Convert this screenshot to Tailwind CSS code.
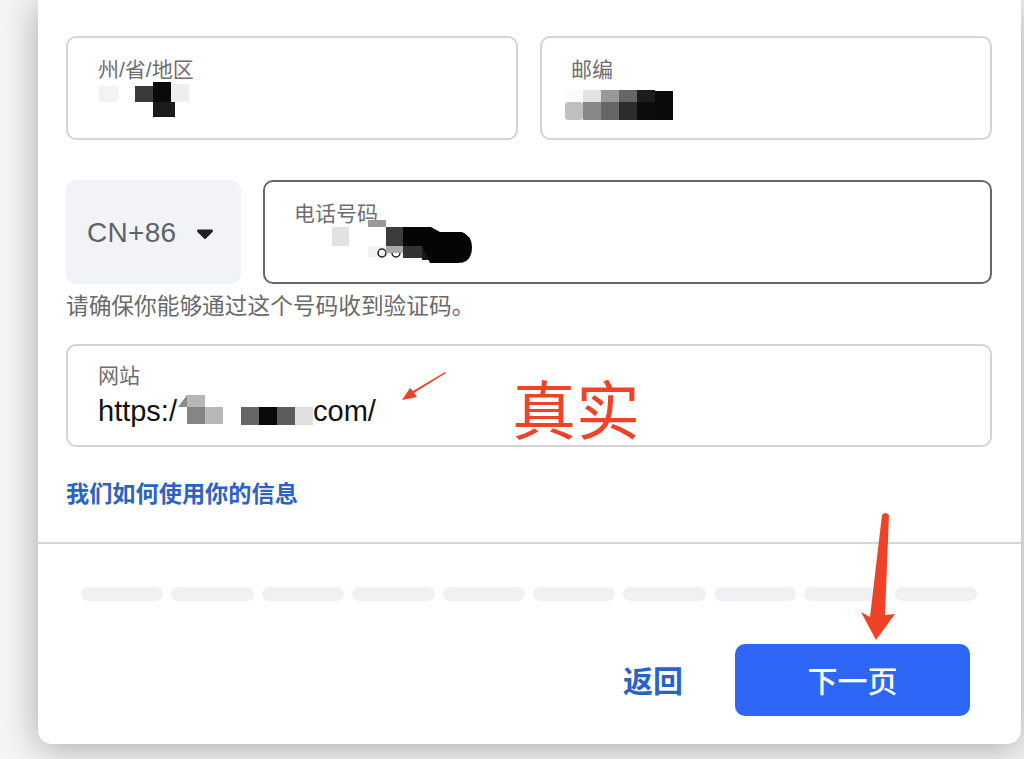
<!DOCTYPE html>
<html lang="zh-CN">
<head>
    <meta charset="UTF-8">
    <meta name="viewport" content="width=device-width, initial-scale=1.0">
    <title>联系信息</title>
    <script src="https://cdn.jsdelivr.net/npm/@tailwindcss/browser@4"></script>
</head>
<body class="h-[759px] overflow-hidden bg-[#f5f5f5] font-['Liberation_Sans','Noto_Sans_CJK_SC',sans-serif]">
    <div class="relative ml-[38px] h-[744px] w-[983px] rounded-b-[14px] bg-white pt-[36px] shadow-[0_4px_36px_rgba(0,0,0,0.32)]">
        <div class="pl-[28px] pr-[29px]">
            <!-- state + zip -->
            <div class="flex gap-[22px]">
                <div class="h-[104px] w-[452px] rounded-[10px] border-2 border-[#d3d3d9] pl-[30px] pt-[18px]">
                    <div class="text-[21px] leading-[28px] text-[#6e6e6e]">州/省/地区</div>
                    <svg class="block -mt-[4px]" width="100" height="38" viewBox="97 80 100 38">
                        <rect x="98" y="86" width="19" height="16" fill="#f3f3f3"/>
                        <rect x="134" y="86" width="18" height="16" fill="#3a3a3a"/>
                        <rect x="152" y="82" width="18" height="20" fill="#0a0a0a"/>
                        <rect x="152" y="102" width="22" height="15" fill="#1c1c1c"/>
                        <rect x="170" y="84" width="18" height="18" fill="#eeeeee"/>
                    </svg>
                </div>
                <div class="h-[104px] w-[452px] rounded-[10px] border-2 border-[#d3d3d9] pl-[29px] pt-[18px]">
                    <div class="text-[21px] leading-[28px] text-[#6e6e6e]">邮编</div>
                    <svg class="block -ml-[6px] mt-[6px]" width="110" height="32" viewBox="565 90 110 32">
                        <rect x="565" y="90" width="18" height="12" fill="#fbfbfb"/>
                        <rect x="583" y="90" width="18" height="12" fill="#e3e3e3"/>
                        <rect x="601" y="90" width="18" height="12" fill="#999999"/>
                        <rect x="619" y="90" width="18" height="12" fill="#666666"/>
                        <rect x="637" y="90" width="18" height="12" fill="#1c1c1c"/>
                        <rect x="655" y="91" width="18" height="11" fill="#0a0a0a"/>
                        <rect x="565" y="102" width="18" height="18" rx="3" fill="#c0c0c0"/>
                        <rect x="583" y="102" width="18" height="18" fill="#888888"/>
                        <rect x="601" y="102" width="18" height="18" fill="#666666"/>
                        <rect x="619" y="102" width="18" height="18" fill="#2c2c2c"/>
                        <rect x="637" y="102" width="18" height="18" fill="#0c0c0c"/>
                        <rect x="655" y="102" width="18" height="18" fill="#0a0a0a"/>
                    </svg>
                </div>
            </div>

            <!-- phone -->
            <div class="mt-[40px] flex gap-[22px]">
                <div class="flex h-[104px] w-[175px] items-center rounded-[10px] bg-[#f2f3f6] pl-[21px] pt-[1px]">
                    <span class="text-[28px] tracking-[0.3px] text-[#5f6368]">CN+86</span>
                    <svg class="ml-[20px] mt-[3px]" width="18" height="11" viewBox="0 0 18 11"><path d="M1 1.5Q1 .5 2.5 .5H15.5Q17 .5 17 1.5Q17 2.5 16 3.5L10 9.5Q9 10.5 8 9.5L2 3.5Q1 2.5 1 1.5Z" fill="#1f2023"/></svg>
                </div>
                <div class="h-[104px] w-[729px] rounded-[10px] border-2 border-[#65676b] pl-[29px] pt-[18px]">
                    <div class="text-[21px] leading-[28px] text-[#6e6e6e]">电话号码</div>
                    <svg class="block -mt-[10px]" width="200" height="50" viewBox="294 218 200 50">
                        <rect x="332" y="227" width="17" height="19" fill="#e2e2e2"/>
                        <rect x="368" y="220" width="18" height="7" fill="#999999"/>
                        <rect x="368" y="246" width="18" height="11" fill="#f2f2f2"/>
                        <circle cx="382" cy="253" r="4" fill="none" stroke="#222222" stroke-width="1.5"/>
                        <circle cx="396" cy="253" r="4" fill="none" stroke="#222222" stroke-width="1.5"/>
                        <rect x="386" y="227" width="17" height="19" fill="#3c3c3c"/>
                        <rect x="386" y="246" width="17" height="7" fill="#aaaaaa"/>
                        <rect x="403" y="246" width="19" height="12" fill="#333333"/>
                        <rect x="422" y="246" width="17" height="14" fill="#1a1a1a"/>
                        <path d="M403 227H431L440 232H462Q472 236 472 247Q472 263 458 263H430L422 246H403Z" fill="#050505"/>
                    </svg>
                </div>
            </div>
            <p class="mt-[9px] text-[22.7px] leading-[26px] text-[#6a6a6a]">请确保你能够通过这个号码收到验证码。</p>

            <!-- website -->
            <div class="mt-[25px] h-[103px] w-[926px] rounded-[10px] border-2 border-[#d3d3d9] pl-[30px] pt-[16px]">
                <div class="text-[21px] leading-[27px] text-[#6e6e6e]">网站</div>
                <div class="relative mt-[6px] flex h-[34px] items-center text-[29px] text-[#111111]">
                    <span>https:/</span>
                    <svg class="-ml-[1px] -mt-[6px]" width="140" height="36" viewBox="177 392 140 36">
                        <rect x="188" y="396" width="18" height="12" fill="#b6b6b6"/>
                        <path d="M179 408L188 396V408Z" fill="#8a8a8a"/>
                        <rect x="188" y="408" width="18" height="17" fill="#858585"/>
                        <rect x="206" y="408" width="18" height="17" fill="#b8b8b8"/>
                        <rect x="242" y="408" width="18" height="18" fill="#666666"/>
                        <rect x="260" y="408" width="18" height="18" fill="#0a0a0a"/>
                        <rect x="278" y="408" width="18" height="18" fill="#5c5c5c"/>
                        <rect x="296" y="408" width="18" height="18" fill="#e0e0e0"/>
                    </svg>
                    <span class="-ml-[3px]">com/</span>
                </div>
            </div>

            <a class="mt-[31px] block text-[23.2px] font-bold leading-[32px] text-[#2b63c4]" href="#">我们如何使用你的信息</a>
        </div>

        <div class="mt-[32px] border-t-2 border-[#d5d5da]"></div>

        <!-- progress -->
        <div class="ml-[43px] mt-[43px] flex w-[896px] gap-[8px]">
            <div class="h-[14px] flex-1 rounded-full bg-[#f0f1f5]"></div>
            <div class="h-[14px] flex-1 rounded-full bg-[#f0f1f5]"></div>
            <div class="h-[14px] flex-1 rounded-full bg-[#f0f1f5]"></div>
            <div class="h-[14px] flex-1 rounded-full bg-[#f0f1f5]"></div>
            <div class="h-[14px] flex-1 rounded-full bg-[#f0f1f5]"></div>
            <div class="h-[14px] flex-1 rounded-full bg-[#f0f1f5]"></div>
            <div class="h-[14px] flex-1 rounded-full bg-[#f0f1f5]"></div>
            <div class="h-[14px] flex-1 rounded-full bg-[#f0f1f5]"></div>
            <div class="h-[14px] flex-1 rounded-full bg-[#f0f1f5]"></div>
            <div class="h-[14px] flex-1 rounded-full bg-[#f0f1f5]"></div>
        </div>

        <div class="mt-[43px] flex items-center justify-end gap-[52px] pr-[51px]">
            <a class="pt-[3px] text-[30px] font-bold text-[#2b63c4]" href="#">返回</a>
            <button class="h-[72px] w-[235px] rounded-[10px] bg-[#2e67f8] pt-[3px] text-[30px] font-medium text-white">下一页</button>
        </div>

        <!-- red annotations over the form -->
        <span class="absolute left-[474px] top-[372px] text-[64px] leading-[80px] text-[#ee4326]">真实</span>
        <svg class="absolute left-[360px] top-[368px]" width="52" height="36" viewBox="398 368 52 36">
            <path d="M446 373L414 393L417 397L402 400L410 388L413 391L445 372Z" fill="#ee4326"/>
        </svg>
        <svg class="absolute left-[815px] top-[505px]" width="50" height="140" viewBox="853 505 50 140">
            <path d="M882 515Q885 511 889 515L885 615L895 614L876 640L861 612L870 617Z" fill="#ee4326"/>
        </svg>
    </div>
</body>
</html>
